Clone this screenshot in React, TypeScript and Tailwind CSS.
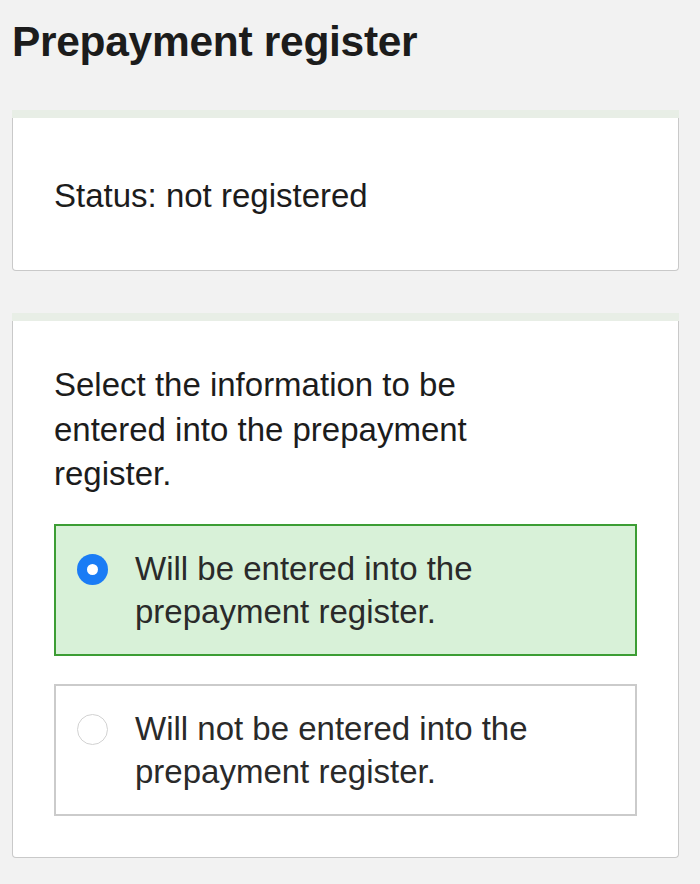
import { useState } from 'react';

type Choice = 'enter' | 'skip';

const options: { id: Choice; label: string }[] = [
  { id: 'enter', label: 'Will be entered into the prepayment register.' },
  { id: 'skip', label: 'Will not be entered into the prepayment register.' },
];

function Card({ children, className = '' }: { children: React.ReactNode; className?: string }) {
  return (
    <div className="flex flex-col">
      <div className="h-2 bg-[#e8eee6]" />
      <div className={`bg-white border-[1.5px] border-t-0 border-[#c9c9c9] rounded-b-[4px] ${className}`}>
        {children}
      </div>
    </div>
  );
}

function Radio({ checked }: { checked: boolean }) {
  if (checked) {
    return (
      <span className="mt-[7px] flex h-[31px] w-[31px] shrink-0 items-center justify-center rounded-full bg-[#1a7cf5]">
        <span className="h-[11px] w-[11px] rounded-full bg-white" />
      </span>
    );
  }
  return <span className="mt-[7px] h-[31px] w-[31px] shrink-0 rounded-full border-[1.5px] border-[#d2d2d2] bg-white" />;
}

export default function App() {
  const [choice, setChoice] = useState<Choice>('enter');

  return (
    <div className="min-h-[884px] bg-[#f2f2f2] pl-3 pr-[21px] pt-[14px] font-['Liberation_Sans',Arial,sans-serif] text-[#1c1c1c]">
      <h1 className="text-[42.5px] font-bold leading-[56px] tracking-[-0.3px]">Prepayment register</h1>

      <div className="mt-[40px]">
        <Card className="px-[41px] pt-[56px] pb-[52px]">
          <p className="text-[33px] leading-[44px]">Status: not registered</p>
        </Card>
      </div>

      <div className="mt-[42px]">
        <Card className="px-[41px] pt-[42px] pb-[41px]">
          <p className="max-w-[430px] text-[33px] leading-[44.5px]">
            Select the information to be entered into the prepayment register.
          </p>
          <div className="mt-[27px] flex flex-col gap-[28px]">
            {options.map((o) => {
              const active = choice === o.id;
              return (
                <button
                  key={o.id}
                  type="button"
                  onClick={() => setChoice(o.id)}
                  className={`flex items-start gap-[27px] border-2 pl-[21px] pr-4 pt-[21px] pb-[21px] text-left ${
                    active ? 'border-[#3c9d34] bg-[#d8f1d8]' : 'border-[#cbcbcb] bg-white'
                  }`}
                >
                  <Radio checked={active} />
                  <span className="text-[33px] leading-[43px] text-[#2a2a2a] pr-[40px]">{o.label}</span>
                </button>
              );
            })}
          </div>
        </Card>
      </div>
    </div>
  );
}
